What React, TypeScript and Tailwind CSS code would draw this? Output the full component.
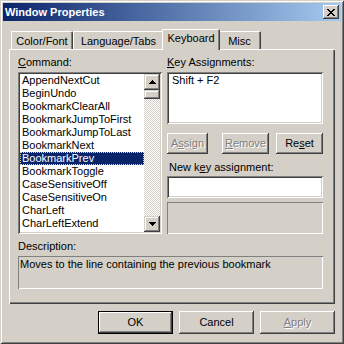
import React from "react";

const items = [
  "AppendNextCut",
  "BeginUndo",
  "BookmarkClearAll",
  "BookmarkJumpToFirst",
  "BookmarkJumpToLast",
  "BookmarkNext",
  "BookmarkPrev",
  "BookmarkToggle",
  "CaseSensitiveOff",
  "CaseSensitiveOn",
  "CharLeft",
  "CharLeftExtend",
  "CharRight",
];

function CloseGlyph() {
  const rows = ["11000011", "01100110", "00111100", "00011000", "00111100", "01100110", "11000011"];
  return (
    <svg width="8" height="7" viewBox="0 0 8 7" shapeRendering="crispEdges">
      {rows.map((r, y) =>
        r.split("").map((c, x) => (c === "1" ? <rect key={`${x}-${y}`} x={x} y={y} width="1" height="1" fill="#000" /> : null))
      )}
    </svg>
  );
}

function Arrow({ down }: { down?: boolean }) {
  const rows = [
    [3, 1],
    [2, 3],
    [1, 5],
    [0, 7],
  ];
  const r = down ? [...rows].reverse() : rows;
  return (
    <svg width="7" height="4" viewBox="0 0 7 4" shapeRendering="crispEdges">
      {r.map(([x, w], y) => (
        <rect key={y} x={x} y={y} width={w} height="1" fill="#000" />
      ))}
    </svg>
  );
}

function Tab({ label, w, selected }: { label: string; w: number; selected?: boolean }) {
  if (selected) {
    return (
      <div
        className="relative z-10 -mx-[2px] mb-[-1px] h-[21px] bg-[#d4d0c8] pt-[3px] text-center leading-[13px] rounded-tr-[2px] shadow-[inset_1px_1px_#ffffff,inset_-1px_0_#404040,inset_-2px_0_#808080]"
        style={{ width: w + 4 }}
      >
        {label}
      </div>
    );
  }
  return (
    <div
      className="h-[18px] bg-[#d4d0c8] pt-[4px] text-center leading-[13px] rounded-tr-[2px] shadow-[inset_1px_1px_#ffffff,inset_-1px_0_#404040,inset_-2px_0_#808080]"
      style={{ width: w }}
    >
      {label}
    </div>
  );
}

export default function App() {
  return (
    <div className="w-[344px] h-[344px] bg-[#d4d0c8] p-[3px] font-['Liberation_Sans',Arial,sans-serif] text-[11px] text-black shadow-[inset_1px_1px_#d4d0c8,inset_-1px_-1px_#404040,inset_2px_2px_#ffffff,inset_-2px_-2px_#808080]">
      {/* Title bar */}
      <div className="flex h-[18px] items-center justify-between bg-[linear-gradient(to_right,#0a246a,#a6caf0)] pl-[2px] pr-[2px]">
        <span className="font-bold text-white leading-[13px]">Window Properties</span>
        <div className="flex h-[14px] w-[16px] items-center justify-center bg-[#d4d0c8] shadow-[inset_-1px_-1px_#404040,inset_1px_1px_#ffffff,inset_-2px_-2px_#808080]">
          <CloseGlyph />
        </div>
      </div>

      {/* Body */}
      <div className="px-[6px] pt-[8px]">
        {/* Tabs row */}
        <div className="flex h-[20px] items-end pl-[2px]">
          <Tab label="Color/Font" w={62} />
          <Tab label="Language/Tabs" w={91} />
          <Tab label="Keyboard" w={54} selected />
          <Tab label="Misc" w={43} />
        </div>

        {/* Panel */}
        <div className="flex h-[255px] w-[326px] flex-col bg-[#d4d0c8] pl-[9px] pr-[12px] pt-[7px] shadow-[inset_1px_1px_#ffffff,inset_-1px_-1px_#404040,inset_-2px_-2px_#808080]">
          <div className="flex gap-[5px]">
            {/* Left column */}
            <div className="flex w-[144px] flex-col">
              <div className="h-[16px] leading-[13px]">
                <u>C</u>ommand:
              </div>
              <div className="flex h-[162px] bg-white p-[2px] shadow-[inset_1px_1px_#808080,inset_-1px_-1px_#ffffff,inset_2px_2px_#404040,inset_-2px_-2px_#d4d0c8]">
                <div className="flex-1 overflow-hidden">
                  {items.map((it) =>
                    it === "BookmarkPrev" ? (
                      <div
                        key={it}
                        className="h-[13px] bg-[#0a246a] pl-[2px] leading-[13px] text-white outline outline-1 outline-dotted outline-[#e6d48a] -outline-offset-1"
                      >
                        {it}
                      </div>
                    ) : (
                      <div key={it} className="h-[13px] pl-[2px] leading-[13px]">
                        {it}
                      </div>
                    )
                  )}
                </div>
                <div className="flex w-[16px] flex-col">
                  <div className="flex h-[16px] items-center justify-center bg-[#d4d0c8] shadow-[inset_-1px_-1px_#404040,inset_1px_1px_#d4d0c8,inset_-2px_-2px_#808080,inset_2px_2px_#ffffff]">
                    <Arrow />
                  </div>
                  <div className="h-[9px] bg-[#d4d0c8] shadow-[inset_-1px_-1px_#404040,inset_1px_1px_#d4d0c8,inset_-2px_-2px_#808080,inset_2px_2px_#ffffff]" />
                  <div className="flex-1 bg-[repeating-conic-gradient(#d4d0c8_0%_25%,#ffffff_0%_50%)] bg-[length:2px_2px]" />
                  <div className="flex h-[16px] items-center justify-center bg-[#d4d0c8] shadow-[inset_-1px_-1px_#404040,inset_1px_1px_#d4d0c8,inset_-2px_-2px_#808080,inset_2px_2px_#ffffff]">
                    <Arrow down />
                  </div>
                </div>
              </div>
            </div>

            {/* Right column */}
            <div className="flex w-[156px] flex-col">
              <div className="h-[16px] leading-[13px]">
                <u>K</u>ey Assignments:
              </div>
              <div className="h-[52px] bg-white p-[2px] shadow-[inset_1px_1px_#808080,inset_-1px_-1px_#ffffff,inset_2px_2px_#404040,inset_-2px_-2px_#d4d0c8]">
                <div className="h-[13px] pl-[3px] leading-[13px]">Shift + F2</div>
              </div>
              <div className="mt-[9px] flex h-[21px]">
                <div className="flex w-[41px] items-center justify-center text-[#808080] [text-shadow:1px_1px_0_#ffffff] shadow-[inset_-1px_-1px_#404040,inset_1px_1px_#ffffff,inset_-2px_-2px_#808080,inset_2px_2px_#d4d0c8]">
                  <span>
                    A<u>s</u>sign
                  </span>
                </div>
                <div className="ml-[14px] flex w-[47px] items-center justify-center text-[#808080] [text-shadow:1px_1px_0_#ffffff] shadow-[inset_-1px_-1px_#404040,inset_1px_1px_#ffffff,inset_-2px_-2px_#808080,inset_2px_2px_#d4d0c8]">
                  <span>
                    <u>R</u>emove
                  </span>
                </div>
                <div className="ml-auto flex w-[47px] items-center justify-center shadow-[inset_-1px_-1px_#404040,inset_1px_1px_#ffffff,inset_-2px_-2px_#808080,inset_2px_2px_#d4d0c8]">
                  <span>
                    Re<u>s</u>et
                  </span>
                </div>
              </div>
              <div className="mt-[7px] h-[15px] pl-[2px] leading-[13px]">
                New k<u>e</u>y assignment:
              </div>
              <div className="h-[22px] bg-white shadow-[inset_1px_1px_#808080,inset_-1px_-1px_#ffffff,inset_2px_2px_#404040,inset_-2px_-2px_#d4d0c8]" />
              <div className="mt-[4px] h-[32px] shadow-[inset_1px_1px_#808080,inset_-1px_-1px_#ffffff]" />
            </div>
          </div>

          <div className="mt-[6px] h-[16px] leading-[13px]">Description:</div>
          <div className="h-[33px] w-[305px] pl-[2px] pt-[2px] leading-[13px] shadow-[inset_1px_1px_#808080,inset_-1px_-1px_#ffffff]">
            Moves to the line containing the previous bookmark
          </div>
        </div>

        {/* Footer buttons */}
        <div className="mt-[7px] flex w-[326px] justify-end gap-[6px]">
          <div className="flex h-[23px] w-[75px] items-center justify-center border border-black shadow-[inset_-1px_-1px_#404040,inset_1px_1px_#ffffff,inset_-2px_-2px_#808080,inset_2px_2px_#d4d0c8]">
            OK
          </div>
          <div className="flex h-[23px] w-[75px] items-center justify-center shadow-[inset_-1px_-1px_#404040,inset_1px_1px_#ffffff,inset_-2px_-2px_#808080,inset_2px_2px_#d4d0c8]">
            Cancel
          </div>
          <div className="flex h-[23px] w-[75px] items-center justify-center text-[#808080] [text-shadow:1px_1px_0_#ffffff] shadow-[inset_-1px_-1px_#404040,inset_1px_1px_#ffffff,inset_-2px_-2px_#808080,inset_2px_2px_#d4d0c8]">
            <span>
              <u>A</u>pply
            </span>
          </div>
        </div>
      </div>
    </div>
  );
}
